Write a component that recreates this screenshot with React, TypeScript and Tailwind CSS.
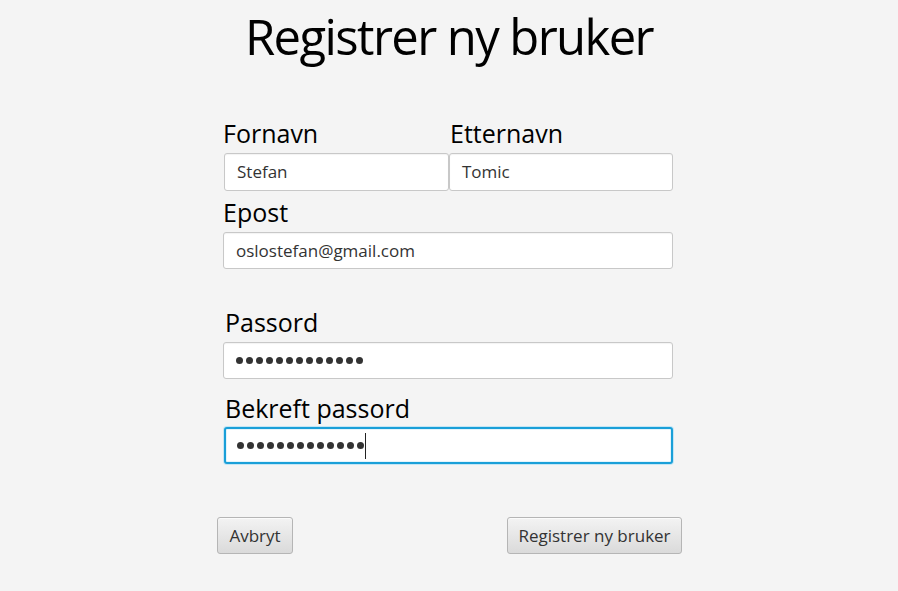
const font = { fontFamily: '"Open Sans", "Noto Sans", sans-serif' }

const Dots = ({ count }: { count: number }) => (
  <div className="flex items-center gap-[3px]">
    {Array.from({ length: count }).map((_, i) => (
      <span key={i} className="block w-[7px] h-[7px] rounded-full bg-[#333333]" />
    ))}
  </div>
)

const Field = ({
  children,
  className = '',
  focused = false,
}: {
  children: React.ReactNode
  className?: string
  focused?: boolean
}) => (
  <div
    className={`flex items-center h-[37px] bg-white rounded-[3px] text-[17px] text-[#333333] ${
      focused
        ? 'border-2 border-[#1a9fd8] pl-[11px] shadow-[0_0_0_1px_#c4e6f5,inset_0_0_0_1px_#e4f4fb]'
        : 'border border-[#c8c8c8] pl-[12px] shadow-[inset_0_1px_1px_rgba(0,0,0,0.05)]'
    } ${className}`}
  >
    {children}
  </div>
)

const Label = ({ children, className = '' }: { children: React.ReactNode; className?: string }) => (
  <div className={`text-[25px] leading-[30px] text-black ${className}`}>{children}</div>
)

const btn =
  'h-[37px] rounded-[3px] border border-[#b5b5b5] bg-gradient-to-b from-[#f3f3f3] to-[#dadada] shadow-[inset_0_1px_0_#fbfbfb] text-[17px] text-[#333333]'

export default function App() {
  return (
    <div className="w-full h-[591px] bg-[#f4f4f4] overflow-hidden" style={font}>
      <h1 className="pt-[12px] text-center text-[49px] leading-[49px] tracking-[-1.6px] text-black">
        Registrer ny bruker
      </h1>

      <div className="ml-[217px] w-[465px] flex flex-col">
        <div className="ml-[6px] w-[450px] flex flex-col">
          {/* navn */}
          <div className="mt-[57px] flex">
            <div className="w-[226px] flex flex-col">
              <Label>Fornavn</Label>
              <Field className="mt-[5px] h-[38px] ml-[1px]">Stefan</Field>
            </div>
            <div className="flex-1 flex flex-col">
              <Label className="ml-[1px]">Etternavn</Label>
              <Field className="mt-[5px] h-[38px]">Tomic</Field>
            </div>
          </div>

          <Label className="mt-[6px]">Epost</Label>
          <Field className="mt-[5px]">oslostefan@gmail.com</Field>

          <Label className="mt-[38px] ml-[2px]">Passord</Label>
          <Field className="mt-[5px]">
            <Dots count={13} />
          </Field>

          <Label className="mt-[14px] ml-[2px]">Bekreft passord</Label>
          <Field focused className="mt-[4px] ml-[1px]">
            <Dots count={13} />
            <span className="ml-[1px] w-[1px] h-[26px] bg-[#222222]" />
          </Field>
        </div>

        <div className="mt-[53px] flex justify-between">
          <button className={`${btn} w-[76px]`}>Avbryt</button>
          <button className={`${btn} w-[175px]`}>Registrer ny bruker</button>
        </div>
      </div>
    </div>
  )
}
